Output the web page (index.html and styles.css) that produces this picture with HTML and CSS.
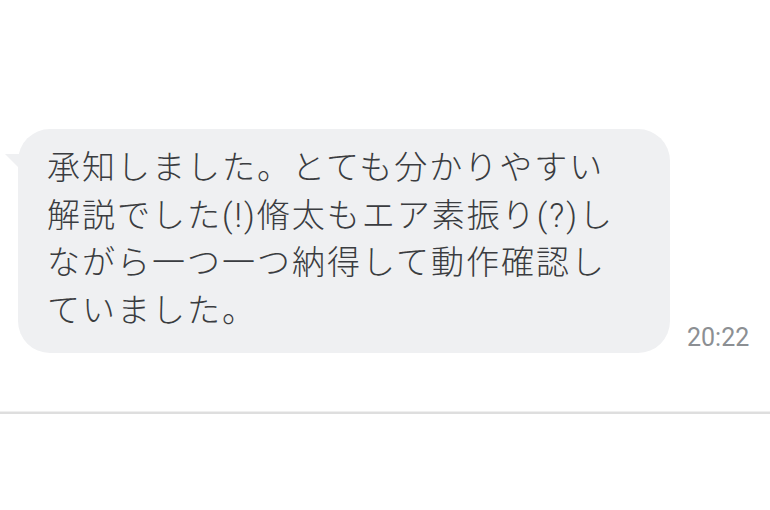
FILE: index.html
```html
<!DOCTYPE html>
<html lang="ja">
<head>
<meta charset="utf-8">
<link rel="stylesheet" href="styles.css">
</head>
<body>
<div class="chat">
  <div class="row">
    <div class="bubble">
      <p class="text">承知しました。とても分かりやすい<br>解説でした(!)脩太もエア素振り(?)し<br>ながら一つ一つ納得して動作確認し<br>ていました。</p>
    </div>
    <span class="time">20:22</span>
  </div>
</div>
<div class="divider"></div>
</body>
</html>
```

FILE: styles.css
```css
html, body {
  margin: 0;
  padding: 0;
  background: #ffffff;
}
body {
  width: 770px;
  height: 510px;
  overflow: hidden;
}
.chat {
  padding: 129px 0 0 18px;
  height: 411px;
  box-sizing: border-box;
}
.row {
  display: flex;
  align-items: flex-end;
  gap: 17px;
}
.bubble {
  position: relative;
  width: 652px;
  height: 224px;
  box-sizing: border-box;
  background: #eff0f2;
  border-radius: 32px;
  padding: 15px 0 0 29px;
}
.bubble::before {
  content: "";
  position: absolute;
  left: -13px;
  top: 25px;
  width: 0;
  height: 0;
  border-top: 17px solid #eff0f2;
  border-left: 17px solid transparent;
}
.text {
  margin: 0;
  font-family: Roboto, "Noto Sans CJK JP", sans-serif;
  font-size: 33px;
  font-weight: 300;
  line-height: 47.5px;
  letter-spacing: 2px;
  color: #3a3c40;
  white-space: nowrap;
}
.time {
  font-family: Roboto, "Liberation Sans", sans-serif;
  font-size: 25px;
  line-height: 25px;
  color: #8c8f93;
  padding-bottom: 3px;
}
.divider {
  height: 2px;
  background: #dedede;
  border-top: 1px solid #efefef;
}
```
